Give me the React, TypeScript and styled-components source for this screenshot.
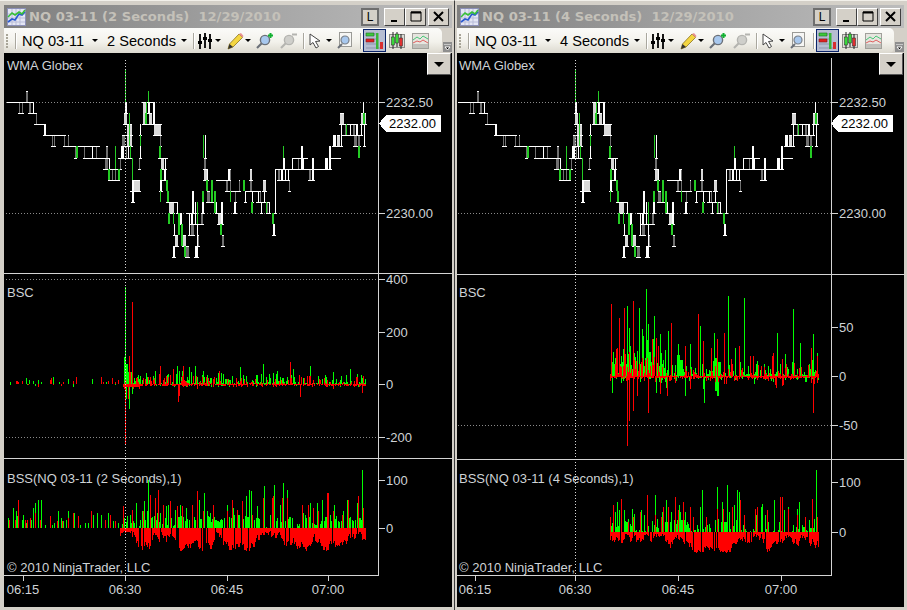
import React from 'react';
import styled, { createGlobalStyle } from 'styled-components';

const Global = createGlobalStyle`
  html, body { margin: 0; padding: 0; background: #d4d0c8; overflow: hidden; }
  #root { width: 907px; height: 610px; }
`;

const Desktop = styled.div`
  display: flex;
  width: 907px;
  height: 610px;
  background: #d4d0c8;
`;

const Window = styled.div<{ $w: number; $pl: number; $pr: number; $divider?: boolean }>`
  position: relative;
  display: flex;
  flex-direction: column;
  box-sizing: border-box;
  width: ${p => p.$w}px;
  height: 610px;
  padding: 4px ${p => p.$pr}px 3px ${p => p.$pl}px;
  background: #d4d0c8;
  border-top: 1px solid #f2f0ea;
  border-right: ${p => (p.$divider ? '1px solid #3c3c3c' : '0')};
`;

const TitleBar = styled.div`
  display: flex;
  align-items: center;
  height: 23px;
  flex: none;
  padding: 0 3px 0 3px;
  background: linear-gradient(90deg, #7e7e7e 0%, #a4a4a4 55%, #bcbcbc 100%);
`;

const TitleText = styled.span`
  margin-left: 3px;
  font: bold 13.1px "DejaVu Sans", Verdana, sans-serif;
  color: #c4c1b9;
  white-space: pre;
  flex: 1;
`;

const LockButton = styled.div`
  box-sizing: border-box;
  width: 18px;
  height: 18px;
  margin-right: 5px;
  display: flex;
  align-items: center;
  justify-content: center;
  border: 2px solid #6e6e6e;
  background: #d4d0c8;
  font: 12px "Liberation Sans", Arial, sans-serif;
  color: #000;
`;

const CaptionButton = styled.div<{ $gap?: number }>`
  box-sizing: border-box;
  width: 21px;
  height: 18px;
  margin-left: ${p => p.$gap ?? 0}px;
  display: flex;
  align-items: center;
  justify-content: center;
  background: #d4d0c8;
  border: 1px solid;
  border-color: #fff #404040 #404040 #fff;
`;

const ToolRow = styled.div`
  display: flex;
  height: 25px;
  flex: none;
  background: #d4d0c8;
`;

const Toolbar = styled.div`
  flex: 1;
  display: flex;
  align-items: center;
  padding-left: 2px;
  border-radius: 0 5px 5px 0;
  background: linear-gradient(180deg, #fbfbf9 0%, #f3f2ec 55%, #dcd9cf 100%);
`;

const Grip = styled.div`
  width: 2px;
  height: 14px;
  margin-right: 7px;
  background: repeating-linear-gradient(180deg, #a8a598 0 2px, transparent 2px 3px);
`;

const Sep = styled.div<{ $r: number; $l?: number }>`
  width: 1px;
  height: 16px;
  margin-left: ${p => p.$l ?? 0}px;
  margin-right: ${p => p.$r}px;
  background: #a9a79e;
  box-shadow: 1px 0 0 #fff;
`;

const ToolText = styled.span<{ $w: number }>`
  width: ${p => p.$w}px;
  font: 14.6px "Liberation Sans", Arial, sans-serif;
  color: #000;
  white-space: nowrap;
`;

const Caret = styled.span<{ $l: number; $r: number }>`
  width: 0;
  height: 0;
  margin: 0 ${p => p.$r}px 0 ${p => p.$l}px;
  border-left: 3px solid transparent;
  border-right: 3px solid transparent;
  border-top: 3px solid #000;
`;

const ToolIcon = styled.svg<{ $r: number }>`
  flex: none;
  margin-right: ${p => p.$r}px;
  display: block;
`;

const ActiveTool = styled.div`
  box-sizing: border-box;
  width: 23px;
  height: 23px;
  margin-right: 3px;
  display: flex;
  align-items: center;
  justify-content: center;
  background: #b6bdd2;
  border: 1px solid #0a246a;
`;

const Chevron = styled.div`
  align-self: flex-end;
  width: 9px;
  height: 10px;
  margin: 0 0 1px 1px;
  background: #8e8e8e;
  display: flex;
  align-items: center;
  justify-content: center;
`;

const ChartArea = styled.div`
  position: relative;
  flex: 1;
  background: #000;
  overflow: hidden;
`;

const ChartSvg = styled.svg`
  display: block;
  width: 100%;
  height: 100%;
  shape-rendering: crispEdges;
`;

const AxisText = styled.text`
  font: 13px "Liberation Sans", Arial, sans-serif;
  fill: #cfd3d6;
`;

const MarkerText = styled.text`
  font: 13px "Liberation Sans", Arial, sans-serif;
  fill: #000;
`;

const MenuButton = styled.div<{ $w: number }>`
  position: absolute;
  top: 0;
  right: 1px;
  box-sizing: border-box;
  width: ${p => p.$w}px;
  height: 22px;
  display: flex;
  align-items: center;
  justify-content: center;
  background: #d4d0c8;
  border: 1px solid;
  border-color: #fff #555 #555 #fff;
  &::after {
    content: '';
    border-left: 5px solid transparent;
    border-right: 5px solid transparent;
    border-top: 5px solid #000;
  }
`;

/* ---------- data ---------- */
const rng = (seed: number) => () => {
  seed = (seed * 16807) % 2147483647;
  return seed / 2147483647;
};
const L = (n: number) => Math.round(102 + 11.1 * n);

type Bar = [number, number, number, 'w' | 'g' | 'l' | 'n', number?];
const BARS: Bar[] = [
  [26,-1,0,'g',2],[19,0,1,'g'],[22,0,1,'g'],[29,0,1,'g',2],[33,0,1,'w'],[36,1,2,'g'],[44,2,3,'w',2],
  [52,3,4,'g'],[54,3,4,'g'],[64,3,4,'g'],[68,3,4,'g'],[76,4,5,'n',2],[75,4,5,'g'],[84,4,5,'g'],[92,4,5,'w'],[96,4,5,'g'],
  [106,4,5,'g',2],[105,5,6,'g',3],[109,5,6,'w'],[108,6,7,'n',2],[112,6,7,'g'],[115,4,6,'n'],[115,6,7,'g'],[118,6,7,'n',2],
  [120,5,6,'g'],[122,4,5,'w',2],[125,-3,0,'n'],[125,0,1,'w',2],[124,1,2,'l',3],[127,2,3,'l',5],[129,1,2,'n'],
  [122,3,4,'g',3],[127,3,4,'l',5],[121,4,5,'w',2],[126,4,5,'g'],[128,4,5,'w',1],[130,4,5,'n',1],[129,2,4,'n'],
  [132,5,7,'n'],[139,5,6,'g'],[132,7,8,'w',2],[134,7,8,'l',6],[132,8,9,'w',2],[140,2,3,'w'],[140,3,4,'n'],[140,4,5,'w'],
  [143,0,2,'l',3],[146,0,2,'n'],[148,-1,0,'n'],[148,0,1,'w',2],[149,1,2,'l',3],[153,0,2,'w',2],[145,1,2,'n'],
  [154,2,3,'l',7],[160,3,4,'g'],[159,4,5,'n',2],[161,5,6,'l',3],[165,5,6,'w'],[160,6,7,'n',2],[164,6,7,'w',2],
  [160,7,8,'w',2],[166,7,8,'n',2],[160,8,9,'n'],[167,8,9,'n',2],[169,9,10,'l',5],[168,10,11,'n',2],[173,10,11,'n'],[177,9,10,'w'],
  [178,10,11,'n',2],[180,10,11,'w',2],[174,11,12,'w'],[175,12,13,'l',3],[173,13,14,'w',2],[178,11,12,'n',2],[181,11,13,'n',2],
  [183,12,13,'l',3],[184,13,14,'n',2],[186,13,14,'g',3],[195,13,14,'w',3],[189,10,12,'w'],[191,10,11,'w',2],[191,11,12,'g',3],
  [192,8,10,'w',2],[195,9,11,'w'],[197,9,11,'n'],[197,11,13,'w'],[198,12,13,'g'],[201,10,11,'g',2],[202,9,10,'w',2],
  [203,3,5,'n'],[205,3,5,'w'],[204,5,6,'g',2],[204,6,7,'l',4],[207,6,7,'w'],[206,7,8,'n',2],[202,8,9,'n',2],[207,8,9,'g',3],
  [211,7,9,'n',2],[214,8,10,'n',2],[216,9,10,'w'],[218,10,11,'l',3],[221,9,11,'w',2],[220,11,12,'n',2],[222,12,13,'g',2],
  [228,6,7,'w',2],[226,7,8,'g',2],[230,6,8,'g'],[230,8,9,'n'],[234,9,10,'w',2],[235,8,9,'g'],
  [239,7,8,'g'],[243,7,8,'n',2],[245,8,9,'w'],[250,6,7,'l',2],[250,7,8,'g',2],[252,8,9,'w'],[251,9,10,'n',2],
  [263,7,8,'l',3],[260,8,9,'g'],[258,8,9,'w'],[261,9,10,'w'],[267,9,10,'g'],[266,9,10,'n'],[264,8,9,'w'],[269,9,10,'w',1],
  [272,10,11,'n',2],[273,11,12,'w',2],[275,6,10,'w'],[278,6,7,'g',2],[281,6,7,'w',2],[285,6,7,'w'],[288,6,7,'w'],[289,7,8,'g'],
  [283,4,5,'n'],[283,5,6,'w',2],[292,5,6,'w'],[298,5,6,'g'],[301,4,6,'w',2],[303,5,6,'w'],[309,6,7,'g',2],[312,5,7,'w',2],
  [325,5,6,'w',3],[329,4,6,'w',2],[333,3,4,'w',3],[337,3,4,'l',3],[340,1,2,'l',4],[341,2,4,'w'],[345,2,3,'g'],[346,2,3,'n'],[350,2,3,'w'],
  [353,2,3,'g',2],[356,2,3,'w',2],[354,3,4,'g',3],[358,3,4,'g',2],[358,4,5,'n',2],[363,0,1,'w'],[361,1,2,'l',2],[363,1,2,'n',2],[365,1,2,'l'],[361,2,3,'w'],[364,2,4,'w'],
];
const HLINES: [number, number, number][] = [
  [7,34,0],[29,37,1],[34,46,2],[43,66,3],[63,100,4],[84,108,5],[103,120,6],[108,120,7],[118,133,5],[127,133,3],[130,141,8],[142,154,0],[142,162,2],
  [158,168,5],[160,168,7],[166,178,9],[186,198,10],[190,202,11],[206,216,9],[216,228,7],[230,240,8],[245,260,8],[256,270,9],[275,293,6],[292,308,5],[276,328,6],[329,341,5],[333,342,4],[340,358,2],[341,362,3],
];
const KIND: Record<string, string> = { w: '#ffffff', g: '#707070', l: '#d8d8d8', n: '#24cc24' };

function priceLayer(map: (x: number) => number) {
  const paths: Record<string, string> = { w: '', g: '', l: '', n: '' };
  let ticks = '';
  for (const [x, t, b, k, w = 1] of BARS) {
    const X = map(x);
    const y0 = L(t), y1 = L(b);
    paths[k] += `M${X} ${y0}h${w}v${y1 - y0}h${-w}z`;
    if (k !== 'n') {
      ticks += `M${X} ${y0}h${w}v1h${-w}zM${X - 1} ${y1}h${w + 2}v1h${-w - 2}z`;
    }
  }
  for (const [a, b, n] of HLINES) {
    const A = map(a), B = map(b);
    ticks += `M${A} ${L(n)}h${B - A}v1h${A - B}z`;
  }
  return { paths, ticks };
}

type S = [number, number][];
function spikes(list: S, ox: number, base: number) {
  let d = '';
  for (const [z, h] of list) {
    const x = Math.round(ox + z / 3);
    const px = Math.round(Math.abs(h) / 3);
    if (!px) continue;
    d += h > 0 ? `M${x} ${base - px}h1v${px}h-1z` : `M${x} ${base}h1v${px}h-1z`;
  }
  return d;
}
function noise(seed: number, a: number, b: number, base: number, up: boolean, density: number, min: number, max: number, pow = 2) {
  const r = rng(seed);
  let d = '';
  for (let x = a; x <= b; x++) {
    const u = r();
    const h = Math.round(min + (max - min) * Math.pow(r(), pow));
    if (u > density || h <= 0) continue;
    d += up ? `M${x} ${base - h}h1v${h}h-1z` : `M${x} ${base}h1v${h}h-1z`;
  }
  return d;
}
function walk(seed: number, a: number, b: number, base: number, up: boolean, gap: number, min: number, max: number) {
  const r = rng(seed);
  let d = '';
  let v = (min + max) / 2;
  for (let x = a; x <= b; x++) {
    v += (r() - 0.5) * (max - min) * 0.55;
    v = Math.max(min, Math.min(max, v));
    const skip = r() < gap;
    const h = Math.round(v + (r() - 0.5) * 3);
    if (skip || h <= 0) continue;
    d += up ? `M${x} ${base - h}h1v${h}h-1z` : `M${x} ${base}h1v${h}h-1z`;
  }
  return d;
}

const leftBscSparseG: S = [[30,5],[30,-3],[78,18],[82,-3],[87,12],[100,8],[105,-6],[114,12],[124,5],[160,20],[178,5],[205,15],[220,-10],[277,15],[318,6],[345,-3]];
const leftBscSparseR: S = [[48,8],[51,8],[55,6],[67,9],[85,-3],[114,-10],[150,12],[153,18],[159,-3],[184,-5],[190,6],[220,8],[229,20],[304,21],[310,6],[325,10],[337,18],[345,6],[355,12]];
const leftBscG: S = [[375,290],[373,80],[376,80],[379,60],[382,55],[385,20],[388,-75],[379,-45],[396,-30],[415,28],[420,25],[437,34],[447,12],[465,38],[476,10],[532,55],[538,40],[547,40],[550,38],[568,50],[572,35],[586,55],[592,22],[610,38],[613,22],[633,18],[648,18],[679,14],[684,14],[688,12],[720,50],[790,60],[830,40],[880,45],[930,55],[1000,35],[1050,45]];
const leftBscR: S = [[397,245],[388,85],[391,35],[375,-180],[372,-15],[385,-45],[400,-15],[407,18],[417,-15],[443,22],[450,20],[463,18],[481,55],[478,30],[492,18],[505,22],[520,45],[533,-55],[538,-35],[550,55],[578,25],[592,-15],[605,20],[617,22],[625,18],[638,14],[658,40],[870,65],[900,-40],[1085,-25]];
const rBscG: S = [[35,-50],[82,210],[88,145],[91,90],[88,-25],[100,185],[118,205],[125,140],[128,120],[139,260],[145,155],[163,180],[160,110],[168,-50],[180,125],[203,135],[198,-35],[235,95],[230,40],[270,95],[255,-60],[301,150],[311,-80],[343,130],[355,-60],[350,-60],[385,240],[406,85],[433,235],[530,130],[556,65],[580,200],[601,100],[640,125],[650,70],[463,-25],[310,-40]];
const rBscR: S = [[33,215],[47,80],[50,85],[58,175],[73,205],[82,-210],[88,-135],[100,225],[100,-105],[112,-60],[145,-110],[157,110],[169,115],[175,90],[213,160],[202,-60],[181,-55],[255,90],[295,185],[270,-40],[310,105],[334,85],[352,110],[373,130],[372,-25],[393,50],[417,90],[450,60],[460,60],[515,60],[520,70],[545,50],[545,-30],[582,40],[633,85],[640,-110],[652,60],[652,-20],[528,-35]];
const lBssG: S = [[25,30],[40,60],[47,50],[52,35],[65,25],[70,40],[78,15],[93,25],[100,60],[105,75],[115,85],[122,85],[135,10],[155,10],[162,15],[175,50],[182,30],[190,20],[198,25],[205,50],[222,45],[240,8],[255,15],[265,15],[280,40],[290,45],[302,40],[315,15],[325,45],[340,20],[355,15],[372,30],[380,35],[390,40],[395,40],[408,75],[420,25],[425,50],[432,80],[440,50],[445,145],[452,30],[465,30],[470,45],[480,45],[490,45],[497,65],[505,70],[512,30],[525,55],[540,70],[548,20],[558,60],[575,45],[590,40],[597,85],[612,105],[620,50],[630,45],[645,25],[660,25],[680,70]];
const lBssG2: S = [[5,45],[10,60],[20,35],[48,95],[58,115],[62,110],[82,65],[103,125],[120,40],[127,85],[133,130],[140,30],[150,70],[155,75],[160,135],[170,115],[172,40],[220,45],[233,40],[240,75],[260,75],[275,85],[290,25],[303,20],[312,70],[340,50],[350,85],[367,25],[380,75],[390,30],[397,175]];
const lBssR: S = [[28,25],[45,25],[55,85],[75,25],[80,25],[90,30],[105,45],[120,25],[150,35],[170,20],[187,20],[205,30],[218,45],[235,35],[272,50],[315,25],[330,40],[345,20],[368,65],[395,55],[430,50],[450,100],[465,90],[475,115],[490,70],[510,80],[530,65],[545,65],[590,110],[575,70],[610,50],[640,70],[680,50]];
const lBssR2: S = [[5,85],[20,55],[37,80],[65,40],[100,90],[125,90],[130,95],[155,90],[170,90],[215,70],[235,70],[250,60],[265,50],[290,105],[295,105],[308,50],[335,40],[355,85],[385,95],[400,60]];
const rBssG: S = [[38,25],[46,60],[52,90],[58,65],[72,65],[80,30],[95,70],[103,55],[122,65],[133,50],[140,20],[165,110],[172,40],[187,60],[198,95],[212,60],[236,80],[240,60],[256,60],[262,30],[290,20],[305,125],[300,75],[326,25],[350,135],[367,90],[372,30],[380,140],[386,60],[397,70],[403,80],[410,125],[416,120],[467,50],[482,75],[487,85],[495,50],[505,30],[523,95],[537,30],[553,65],[563,75],[580,20],[590,70],[598,90],[615,25],[628,35],[642,40],[647,185]];
const rBssR: S = [[30,45],[40,80],[62,100],[85,30],[100,45],[120,60],[142,110],[165,50],[182,45],[190,75],[205,75],[226,105],[235,65],[250,90],[270,75],[280,45],[318,45],[350,70],[370,70],[395,75],[420,95],[432,50],[465,70],[470,75],[500,65],[540,105],[545,105],[565,70],[590,50],[615,45],[635,100],[650,45]];

const PANELS = {
  left: {
    viewBox: '4 53 448 554', plotR: 378, div1: 273, div2: 458, axisY: 575, cross: 125,
    price: (x: number) => x,
    ticks: [[23,'06:15'],[125,'06:30'],[227,'06:45'],[328,'07:00']] as [number,string][],
    grids: [[6,102],[6,213],[6,279],[6,437]] as [number,number][],
    scale: [[102,'2232.50'],[213,'2230.00'],[279,'400'],[332,'200'],[384,'0'],[437,'-200'],[480,'100'],[528,'0']] as [number,string][],
    title: 'BSS(NQ 03-11 (2 Seconds),1)',
    bsc: {
      g: spikes(leftBscSparseG, 0, 384) + spikes(leftBscG, 0, 384) + noise(11, 125, 365, 384, true, 0.65, 1, 11, 2.5) + noise(12, 125, 365, 384, false, 0.25, 1, 3) + 'M124 372h1v12h-1zM126 364h2v20h-2zM128 372h5v12h-5z',
      r: spikes(leftBscSparseR, 0, 384) + spikes(leftBscR, 0, 384) + noise(13, 125, 365, 384, true, 0.35, 1, 9, 2.5) + noise(14, 125, 365, 384, false, 0.8, 1, 3) + `M123 384h16v3h-16zM362 384h1v9h-1zM333 384h1v5h-1z`,
    },
    bss: {
      g: spikes(lBssG, 0, 528) + spikes(lBssG2, 230, 528) + walk(21, 122, 365, 528, true, 0.42, 0, 12),
      r: spikes(lBssR, 0, 528) + spikes(lBssR2, 230, 528) + walk(22, 120, 365, 528, false, 0.1, 4, 22),
    },
    marker: 0,
  },
  right: {
    viewBox: '457 53 447 554', plotR: 831, div1: 274, div2: 459, axisY: 575, cross: 575,
    price: (x: number) => (x < 125 ? x + 451 : Math.round(x + 450 + (x - 125) * 0.0083)),
    ticks: [[475,'06:15'],[575,'06:30'],[678,'06:45'],[781,'07:00']] as [number,string][],
    grids: [[458,102],[458,213],[458,425]] as [number,number][],
    scale: [[102,'2232.50'],[213,'2230.00'],[327,'50'],[376,'0'],[425,'-50'],[482,'100'],[532,'0']] as [number,string][],
    title: 'BSS(NQ 03-11 (4 Seconds),1)',
    bsc: {
      g: spikes(rBscG, 600, 376) + noise(31, 611, 818, 376, true, 0.7, 1, 16, 2.4) + noise(36, 611, 665, 376, true, 0.9, 6, 28, 1.5) + noise(32, 611, 818, 376, false, 0.4, 1, 7, 2.5) + 'M646 345h1v31h-1zM647 340h1v36h-1zM649 352h2v24h-2zM715 358h3v18h-3zM718 362h3v14h-3zM677 355h3v21h-3zM680 360h3v16h-3zM715 376h3v15h-3z',
      r: spikes(rBscR, 600, 376) + noise(33, 610, 818, 376, true, 0.35, 1, 12, 2) + noise(37, 611, 665, 376, true, 0.5, 3, 24, 1.5) + noise(34, 610, 818, 376, false, 0.95, 1, 3, 1.5) + noise(35, 610, 818, 376, false, 0.2, 2, 10, 2),
    },
    bss: {
      g: spikes(rBssG, 600, 532) + walk(41, 610, 818, 532, true, 0.45, 0, 12) + 'M677 520h9v12h-9zM723 522h4v10h-4z',
      r: spikes(rBssR, 600, 532) + walk(42, 610, 818, 532, false, 0.08, 3, 20),
    },
    marker: 452,
  },
};

const Chart: React.FC<{ side: 'left' | 'right' }> = ({ side }) => {
  const c = PANELS[side];
  const { paths, ticks } = priceLayer(c.price);
  const x0 = side === 'left' ? 4 : 457;
  const xEnd = side === 'left' ? 452 : 904;
  const lx = side === 'left' ? 7 : 459;
  return (
    <ChartSvg viewBox={c.viewBox}>
      {c.grids.map(([a, y]) => (
        <line key={y} x1={a} x2={c.plotR} y1={y + 0.5} y2={y + 0.5} stroke="#8a8a8a" strokeDasharray="1 2" />
      ))}
      <path d={paths.g} fill={KIND.g} />
      <path d={paths.l} fill={KIND.l} />
      <path d={paths.w} fill={KIND.w} />
      <path d={ticks} fill="#ffffff" />
      <path d={paths.n} fill={KIND.n} />
      <path d={c.bsc.g} fill="#00ff00" />
      <path d={c.bsc.r} fill="#ff0000" />
      <path d={c.bss.g} fill="#00ff00" />
      <path d={c.bss.r} fill="#ff0000" />
      <line x1={c.cross + 0.5} x2={c.cross + 0.5} y1={60} y2={575} stroke="#d8d8d8" strokeDasharray="1 2" />
      <line x1={x0} x2={xEnd} y1={c.div1 + 0.5} y2={c.div1 + 0.5} stroke="#d4d4d4" />
      <line x1={x0} x2={xEnd} y1={c.div2 + 0.5} y2={c.div2 + 0.5} stroke="#d4d4d4" />
      <line x1={c.plotR + 0.5} x2={c.plotR + 0.5} y1={58} y2={576} stroke="#d4d4d4" />
      <line x1={x0} x2={c.plotR} y1={c.axisY + 0.5} y2={c.axisY + 0.5} stroke="#d4d4d4" />
      {c.scale.map(([y, t]) => (
        <g key={`${y}${t}`}>
          <line x1={c.plotR + 1} x2={c.plotR + 7} y1={y + 0.5} y2={y + 0.5} stroke="#d4d4d4" />
          <AxisText x={c.plotR + 8} y={y + 5}>{t}</AxisText>
        </g>
      ))}
      {c.ticks.map(([x, t]) => (
        <g key={t}>
          <line x1={x + 0.5} x2={x + 0.5} y1={576} y2={581} stroke="#d4d4d4" />
          <AxisText x={x} y={594} textAnchor="middle">{t}</AxisText>
        </g>
      ))}
      <polygon
        points={`${379 + c.marker},123.5 ${386 + c.marker},115 ${441 + c.marker},115 ${441 + c.marker},132 ${386 + c.marker},132`}
        fill="#fff"
      />
      <MarkerText x={389 + c.marker} y={128}>2232.00</MarkerText>
      <AxisText x={lx} y={70}>WMA Globex</AxisText>
      <AxisText x={lx} y={297}>BSC</AxisText>
      <AxisText x={lx} y={483}>{c.title}</AxisText>
      <AxisText x={lx} y={572}>© 2010 NinjaTrader, LLC</AxisText>
    </ChartSvg>
  );
};

/* ---------- icons ---------- */
const AppIcon = () => (
  <ToolIcon $r={0} width="19" height="18" viewBox="0 0 19 18">
    <rect x="0.5" y="0.5" width="18" height="17" fill="#e4e6f4" stroke="#8c90b8" />
    <path d="M1 6h17M1 10h17M1 14h17M5 1v16M9 1v16M13 1v16" stroke="#b8bcd8" />
    <path d="M1 14l4-3 3 1 4-6 3 1 3-3" fill="none" stroke="#2a5ad0" strokeWidth="1.6" />
    <path d="M1 9l4-4 3 2 4-3 3 2 3-4" fill="none" stroke="#38c038" strokeWidth="1.6" />
  </ToolIcon>
);
const Sliders = () => (
  <ToolIcon $r={0} width="15" height="18" viewBox="0 0 15 18">
    <path d="M2 2v15M7 1v15M12 2v15" stroke="#000" strokeWidth="1.8" />
    <path d="M0 9h4v3H0zM5 5h4v3H5zM10 7h4v3h-4z" fill="#000" />
  </ToolIcon>
);
const Pencil = () => (
  <ToolIcon $r={0} width="17" height="18" viewBox="0 0 17 18">
    <path d="M1 17l1.5-5L12 2l3.5 3.5L6 15z" fill="#f4d640" stroke="#8a7420" strokeWidth="0.8" />
    <path d="M12 2l3.5 3.5 1-1.5L14 1z" fill="#e89090" />
    <path d="M1 17l1.5-5L6 15z" fill="#333" />
  </ToolIcon>
);
const Magnifier: React.FC<{ plus?: boolean; minus?: boolean; r: number }> = ({ plus, minus, r }) => {
  const tone = minus ? '#b4b4b0' : '#6b7078';
  return (
    <ToolIcon $r={r} width="17" height="17" viewBox="0 0 17 17">
      <path d="M1 16l5-5" stroke={tone} strokeWidth="2.2" />
      <circle cx="9" cy="8" r="4.6" fill={minus ? '#cfcfcb' : '#a8c8ee'} stroke={tone} strokeWidth="1.4" />
      {plus && <path d="M12 3.5h5M14.5 1v5" stroke="#10b030" strokeWidth="2" />}
      {minus && <path d="M12 2.5h5" stroke="#b4b4b0" strokeWidth="2" />}
    </ToolIcon>
  );
};
const Cursor = () => (
  <ToolIcon $r={0} width="14" height="16" viewBox="0 0 14 16">
    <path d="M1 1l0 11 3-2.5 3 5.5 2.5-1.5-3-5 4.5-.5z" fill="#fff" stroke="#444" strokeWidth="1" />
  </ToolIcon>
);
const ZoomWindow = () => (
  <ToolIcon $r={0} width="15" height="17" viewBox="0 0 15 17">
    <rect x="2.5" y="0.5" width="12" height="14" fill="#f6f6f4" stroke="#9a9a96" />
    <path d="M1 16l4-4" stroke="#6b7078" strokeWidth="2" />
    <circle cx="8" cy="8" r="4" fill="#a8c8ee" stroke="#7a8088" strokeWidth="1.2" />
  </ToolIcon>
);
const PanelsIcon = () => (
  <ToolIcon $r={0} width="19" height="19" viewBox="0 0 19 19">
    <path d="M1 3h11M1 8h11M1 13h11M1 17h17" stroke="#8d95ad" />
    <path d="M1 2h8v3H1z" fill="#3cc83c" stroke="#247024" strokeWidth="0.6" />
    <path d="M1 8h8v3H1z" fill="#e02020" stroke="#802020" strokeWidth="0.6" />
    <rect x="11" y="2" width="2.5" height="16" fill="#38b838" />
    <rect x="15" y="11" width="3" height="7" fill="#d83030" />
  </ToolIcon>
);
const Candles = () => (
  <ToolIcon $r={7} width="16" height="17" viewBox="0 0 16 17">
    <rect x="0.5" y="2.5" width="15" height="13" fill="#dddcd6" stroke="#8a8a86" />
    <path d="M4 0v17M8 0v15M12 2v15" stroke="#222" />
    <rect x="2.5" y="5" width="3" height="8" fill="#38d838" stroke="#222" strokeWidth="0.5" />
    <rect x="6.5" y="2" width="3" height="9" fill="#38d838" stroke="#222" strokeWidth="0.5" />
    <rect x="10.5" y="6" width="3" height="8" fill="#e03030" stroke="#222" strokeWidth="0.5" />
  </ToolIcon>
);
const LineChart = () => (
  <ToolIcon $r={0} width="17" height="16" viewBox="0 0 17 16">
    <rect x="0.5" y="0.5" width="16" height="15" fill="#e6e5df" stroke="#a0a09a" />
    <path d="M1 12h15M1 14h15" stroke="#9a9a96" />
    <path d="M1 7l4-3 3 2 3-3 5 3" fill="none" stroke="#48c878" />
    <path d="M1 10l4-2 3 1 3-2 5 3" fill="none" stroke="#e06060" />
  </ToolIcon>
);

const ChartWindow: React.FC<{ side: 'left' | 'right'; seconds: number }> = ({ side, seconds }) => {
  const left = side === 'left';
  return (
    <Window $w={left ? 455 : 452} $pl={left ? 4 : 2} $pr={left ? 2 : 3} $divider={left}>
      <TitleBar>
        <AppIcon />
        <TitleText>{`NQ 03-11 (${seconds} Seconds)  12/29/2010`}</TitleText>
        <LockButton>L</LockButton>
        <CaptionButton>
          <svg width="11" height="11" viewBox="0 0 11 11"><path d="M2 9h6v2H2z" fill="#000" /></svg>
        </CaptionButton>
        <CaptionButton>
          <svg width="12" height="11" viewBox="0 0 12 11"><path d="M1 1h10v9H1z" fill="none" stroke="#000" /><path d="M1 1.5h10" stroke="#000" strokeWidth="2" /></svg>
        </CaptionButton>
        <CaptionButton $gap={2}>
          <svg width="11" height="11" viewBox="0 0 11 11"><path d="M1 1l9 9M10 1l-9 9" stroke="#000" strokeWidth="2" /></svg>
        </CaptionButton>
      </TitleBar>
      <ToolRow>
        <Toolbar>
          <Grip />
          <Sep $r={6} />
          <ToolText $w={70}>NQ 03-11</ToolText>
          <Caret $l={0} $r={9} />
          <ToolText $w={74}>{seconds} Seconds</ToolText>
          <Caret $l={0} $r={6} />
          <Sep $r={4} />
          <Sliders />
          <Caret $l={2} $r={6} />
          <Pencil />
          <Caret $l={1} $r={5} />
          <Magnifier plus r={7} />
          <Magnifier minus r={6} />
          <Sep $r={5} />
          <Cursor />
          <Caret $l={3} $r={5} />
          <ZoomWindow />
          <Sep $l={8} $r={2} />
          <ActiveTool><PanelsIcon /></ActiveTool>
          <Candles />
          <LineChart />
        </Toolbar>
        <Chevron>
          <svg width="7" height="7" viewBox="0 0 7 7"><path d="M0 0h7M1 3h5l-2.5 3z" stroke="#fff" fill="#000" strokeWidth="1" /></svg>
        </Chevron>
      </ToolRow>
      <ChartArea>
        <Chart side={side} />
        <MenuButton $w={24} />
      </ChartArea>
    </Window>
  );
};

export default function App() {
  return (
    <Desktop>
      <Global />
      <ChartWindow side="left" seconds={2} />
      <ChartWindow side="right" seconds={4} />
    </Desktop>
  );
}
